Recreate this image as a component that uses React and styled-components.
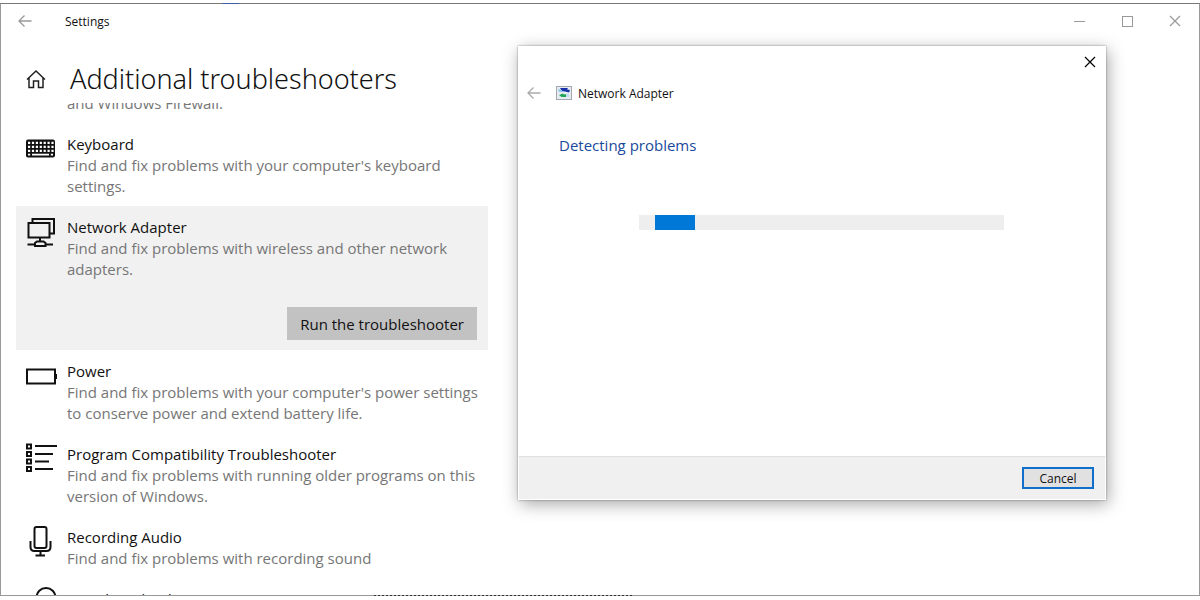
import styled, { createGlobalStyle } from "styled-components";

const GlobalStyle = createGlobalStyle`
    * {
        box-sizing: border-box;
    }
    body {
        margin: 0;
        background: #fff;
        color: #111;
        font-family: "Open Sans", "Noto Sans", sans-serif;
        font-size: 15px;
    }
    button {
        font-family: inherit;
        color: inherit;
        padding: 0;
        border: 0;
        background: none;
    }
    h1, h2, h3, p, ul {
        margin: 0;
        padding: 0;
        font-weight: 400;
    }
`;

const Desktop = styled.div`
    position: relative;
    display: flex;
    flex-direction: column;
    height: 100vh;
    padding: 3px 0 4px;
    overflow: hidden;
`;

// bits of the windows behind that show along the frame
const TopPeek = styled.span`
    position: absolute;
    top: 3px;
    left: 222px;
    width: 17px;
    height: 1px;
    background: #3f5ba8;
`;

const BottomPeek = styled.span`
    position: absolute;
    bottom: 4px;
    left: 374px;
    width: 258px;
    height: 1px;
    background: repeating-linear-gradient(to right, #333 0 2px, #aaa 2px 4px);
`;

const Window = styled.main`
    flex: 1;
    min-height: 0;
    display: flex;
    flex-direction: column;
    border: 1px solid #999;
    border-top-color: #777;
    overflow: hidden;
`;

const TitleBar = styled.header`
    display: flex;
    align-items: center;
    height: 34px;
    padding: 0 15px;
    font-size: 12px;
`;

const AppName = styled.span`
    flex: 1;
    padding-left: 31px;
`;

const WindowButtons = styled.div`
    display: flex;
    gap: 30px;
`;

const IconButton = styled.button`
    display: flex;
    align-items: center;
    justify-content: center;
    width: 18px;
    height: 18px;
    color: ${(props) => props.$color || "#999"};
`;

const PageHeader = styled.div`
    display: flex;
    flex: none;
    align-items: center;
    gap: 23px;
    height: 65px;
    padding: 16px 24px 0;
`;

const HomeLink = styled.a`
    display: flex;
    color: #222;
`;

const PageTitle = styled.h1`
    font-family: "Noto Sans", "Open Sans", sans-serif;
    font-size: 27px;
    font-weight: 300;
    line-height: 40px;
`;

const List = styled.ul`
    flex: 1;
    min-height: 0;
    width: 472px;
    margin-left: 15px;
    list-style: none;
    overflow: hidden;
`;

const Item = styled.li`
    display: grid;
    grid-template-columns: 32px 1fr;
    column-gap: 10px;
    padding: ${(props) => (props.$partial ? 0 : 11)}px 5px 9px 9px;
    margin-top: ${(props) => (props.$partial ? -10 : 0)}px;
    background: ${(props) => (props.$selected ? "#f1f1f1" : "none")};
    line-height: 21px;
`;

const ItemIcon = styled.svg`
    display: block;
    width: 32px;
    height: 32px;
    margin-top: -2px;
    fill: none;
    stroke: #111;
    stroke-width: 2;
`;

const ItemBody = styled.div`
    grid-column: 2;
    display: flex;
    flex-direction: column;
`;

const ItemTitle = styled.h2`
    font-size: 15px;
`;

const ItemText = styled.p`
    color: #767676;
`;

const RunButton = styled.button`
    align-self: flex-end;
    height: 33px;
    margin: 27px 6px 1px 0;
    padding: 0 13px;
    background: #c2c2c2;
    font-size: 15px;
`;

const Dialog = styled.section`
    position: absolute;
    top: 46px;
    right: 94px;
    bottom: 100px;
    width: 49%;
    display: flex;
    flex-direction: column;
    background: #fff;
    border: 1px solid #fff;
    box-shadow: 0 0 2px rgba(0, 0, 0, 0.4), 2px 4px 16px rgba(0, 0, 0, 0.35);
    font-size: 12px;
`;

const DialogTop = styled.div`
    display: flex;
    justify-content: flex-end;
    height: 30px;
    padding: 6px 6px 0;
`;

const DialogHeader = styled.div`
    display: flex;
    align-items: center;
    height: 32px;
    padding-left: 6px;
`;

const DialogName = styled.h2`
    display: flex;
    align-items: center;
    gap: 6px;
    margin-left: 13px;
    font-size: 12px;
`;

const DialogBody = styled.div`
    flex: 1;
    padding: 24px 101px 0 40px;
`;

const Status = styled.h3`
    color: #1a4a9c;
    font-size: 15px;
    line-height: 24px;
`;

const ProgressTrack = styled.div`
    height: 15px;
    margin: 58px 0 0 80px;
    padding-left: 16px;
    background: #eee;
`;

const ProgressChunk = styled.div`
    width: 40px;
    height: 15px;
    background: #0078d7;
`;

const DialogFooter = styled.footer`
    display: flex;
    align-items: center;
    justify-content: flex-end;
    height: 43px;
    padding-right: 11px;
    border-top: 1px solid #dfdfdf;
    background: #f0f0f0;
`;

const CancelButton = styled.button`
    width: 72px;
    height: 22px;
    border: 2px solid #0f6fcb;
    background: #e1e1e1;
    font-size: 12px;
`;

const icons = {
    keyboard: (
        <>
            <rect x="1" y="7.5" width="29" height="18" rx="2" fill="#111" stroke="none" />
            <path
                d="M3 10.8h26M3 14.8h26M3 18.8h26"
                stroke="#fff"
                strokeWidth="2.2"
                strokeDasharray="2.2 1.7"
            />
            <path d="M3 22.7h2.2M7 22.7h17M25.8 22.7h2.2" stroke="#fff" strokeWidth="1.8" />
        </>
    ),
    network: (
        <>
            <path d="M7.5 7V4H29v14.5h-4" />
            <rect x="3.5" y="8" width="21" height="14.5" />
            <path d="M15 22.5v4M2.5 29.5H10M20.5 29.5H28" />
            <path d="M10 31v-3l2-1.5h6.5l2 1.5v3z" />
        </>
    ),
    power: (
        <>
            <rect x="2" y="10.5" width="28" height="14" />
            <path d="M31 15v5" />
        </>
    ),
    program: (
        <>
            <rect x="2" y="2.5" width="4" height="4" />
            <rect x="2" y="10" width="4" height="4" />
            <rect x="2" y="17.5" width="4" height="4" />
            <rect x="2" y="25" width="4" height="4" />
            <path d="M10 4h22M10 12h18M10 19.5h14M10 27h18" />
        </>
    ),
    microphone: (
        <>
            <rect x="9.5" y="2" width="12" height="21" rx="2" />
            <path d="M5.5 16v6q0 4 4 4h12q4 0 4-4v-6M15.5 26v4.5M10.5 30.5h9.5" />
        </>
    ),
    search: (
        <>
            <circle cx="21" cy="10.5" r="9.5" />
            <path d="M14 17.5L3 28.5" />
        </>
    ),
};

const items = [
    { text: "and Windows Firewall.", partial: true },
    {
        icon: "keyboard",
        title: "Keyboard",
        text: "Find and fix problems with your computer's keyboard settings.",
    },
    {
        icon: "network",
        title: "Network Adapter",
        text: "Find and fix problems with wireless and other network adapters.",
        selected: true,
    },
    {
        icon: "power",
        title: "Power",
        text: "Find and fix problems with your computer's power settings to conserve power and extend battery life.",
    },
    {
        icon: "program",
        title: "Program Compatibility Troubleshooter",
        text: "Find and fix problems with running older programs on this version of Windows.",
    },
    {
        icon: "microphone",
        title: "Recording Audio",
        text: "Find and fix problems with recording sound",
    },
    { icon: "search", title: "Search and Indexing" },
];

const BackArrow = () => (
    <svg width="14" height="14" viewBox="0 0 14 14" fill="none" stroke="currentColor" strokeWidth="1.3">
        <path d="M13.5 7H1M6.5 1.500L1 7l5.500 5.500" />
    </svg>
);

const Cross = () => (
    <svg width="12" height="12" viewBox="0 0 12 12" fill="none" stroke="currentColor" strokeWidth="1.2">
        <path d="M1 1l10 10M11 1L1 11" />
    </svg>
);

const AdapterIcon = () => (
    <svg width="16" height="14" viewBox="0 0 16 14">
        <rect x="0.5" y="0.5" width="15" height="13" fill="#e6ecf2" stroke="#a2a8ae" />
        <path d="M4 2h8l-1 1.5 3 .5-1 2.5-4-1-3-.5z" fill="#1530a8" />
        <path d="M2 3l3 1 3 2H3z" fill="#8fc4e8" />
        <path d="M3 9l4-1.5L8 8.500l3-.5v3H5.500z" fill="#23a455" />
        <path d="M10 8h3v3h-3z" fill="#bcdcf0" />
    </svg>
);

const Troubleshooter = ({ item }) => (
    <Item $selected={item.selected} $partial={item.partial}>
        {item.icon && <ItemIcon viewBox="0 0 32 32">{icons[item.icon]}</ItemIcon>}
        <ItemBody>
            {item.title && <ItemTitle>{item.title}</ItemTitle>}
            {item.text && <ItemText>{item.text}</ItemText>}
            {item.selected && <RunButton>Run the troubleshooter</RunButton>}
        </ItemBody>
    </Item>
);

export default () => (
    <>
        <GlobalStyle />
        <Desktop>
            <Window>
                <TitleBar>
                    <IconButton aria-label="Back">
                        <BackArrow />
                    </IconButton>
                    <AppName>Settings</AppName>
                    <WindowButtons>
                        <IconButton aria-label="Minimize">
                            <svg width="11" height="11" stroke="currentColor">
                                <path d="M0 5.5h11" />
                            </svg>
                        </IconButton>
                        <IconButton aria-label="Maximize">
                            <svg width="11" height="11" fill="none" stroke="currentColor">
                                <rect x="0.5" y="0.5" width="10" height="10" />
                            </svg>
                        </IconButton>
                        <IconButton aria-label="Close">
                            <Cross />
                        </IconButton>
                    </WindowButtons>
                </TitleBar>
                <PageHeader>
                    <HomeLink href="#" aria-label="Home">
                        <svg width="22" height="20" viewBox="0 0 22 20" fill="none" stroke="currentColor" strokeWidth="1.5">
                            <path d="M2 10.5L11 2l9 8.500M4 9v9.500h4.500V12h5v6.500H18V9" />
                        </svg>
                    </HomeLink>
                    <PageTitle>Additional troubleshooters</PageTitle>
                </PageHeader>
                <List>
                    {items.map((item) => (
                        <Troubleshooter key={item.text || item.title} item={item} />
                    ))}
                </List>
            </Window>
            <TopPeek />
            <BottomPeek />
            <Dialog role="dialog" aria-label="Network Adapter">
                <DialogTop>
                    <IconButton $color="#000" aria-label="Close dialog">
                        <Cross />
                    </IconButton>
                </DialogTop>
                <DialogHeader>
                    <IconButton $color="#aaa" aria-label="Previous step">
                        <BackArrow />
                    </IconButton>
                    <DialogName>
                        <AdapterIcon />
                        Network Adapter
                    </DialogName>
                </DialogHeader>
                <DialogBody>
                    <Status>Detecting problems</Status>
                    <ProgressTrack role="progressbar" aria-label="Detecting problems">
                        <ProgressChunk />
                    </ProgressTrack>
                </DialogBody>
                <DialogFooter>
                    <CancelButton>Cancel</CancelButton>
                </DialogFooter>
            </Dialog>
        </Desktop>
    </>
);
